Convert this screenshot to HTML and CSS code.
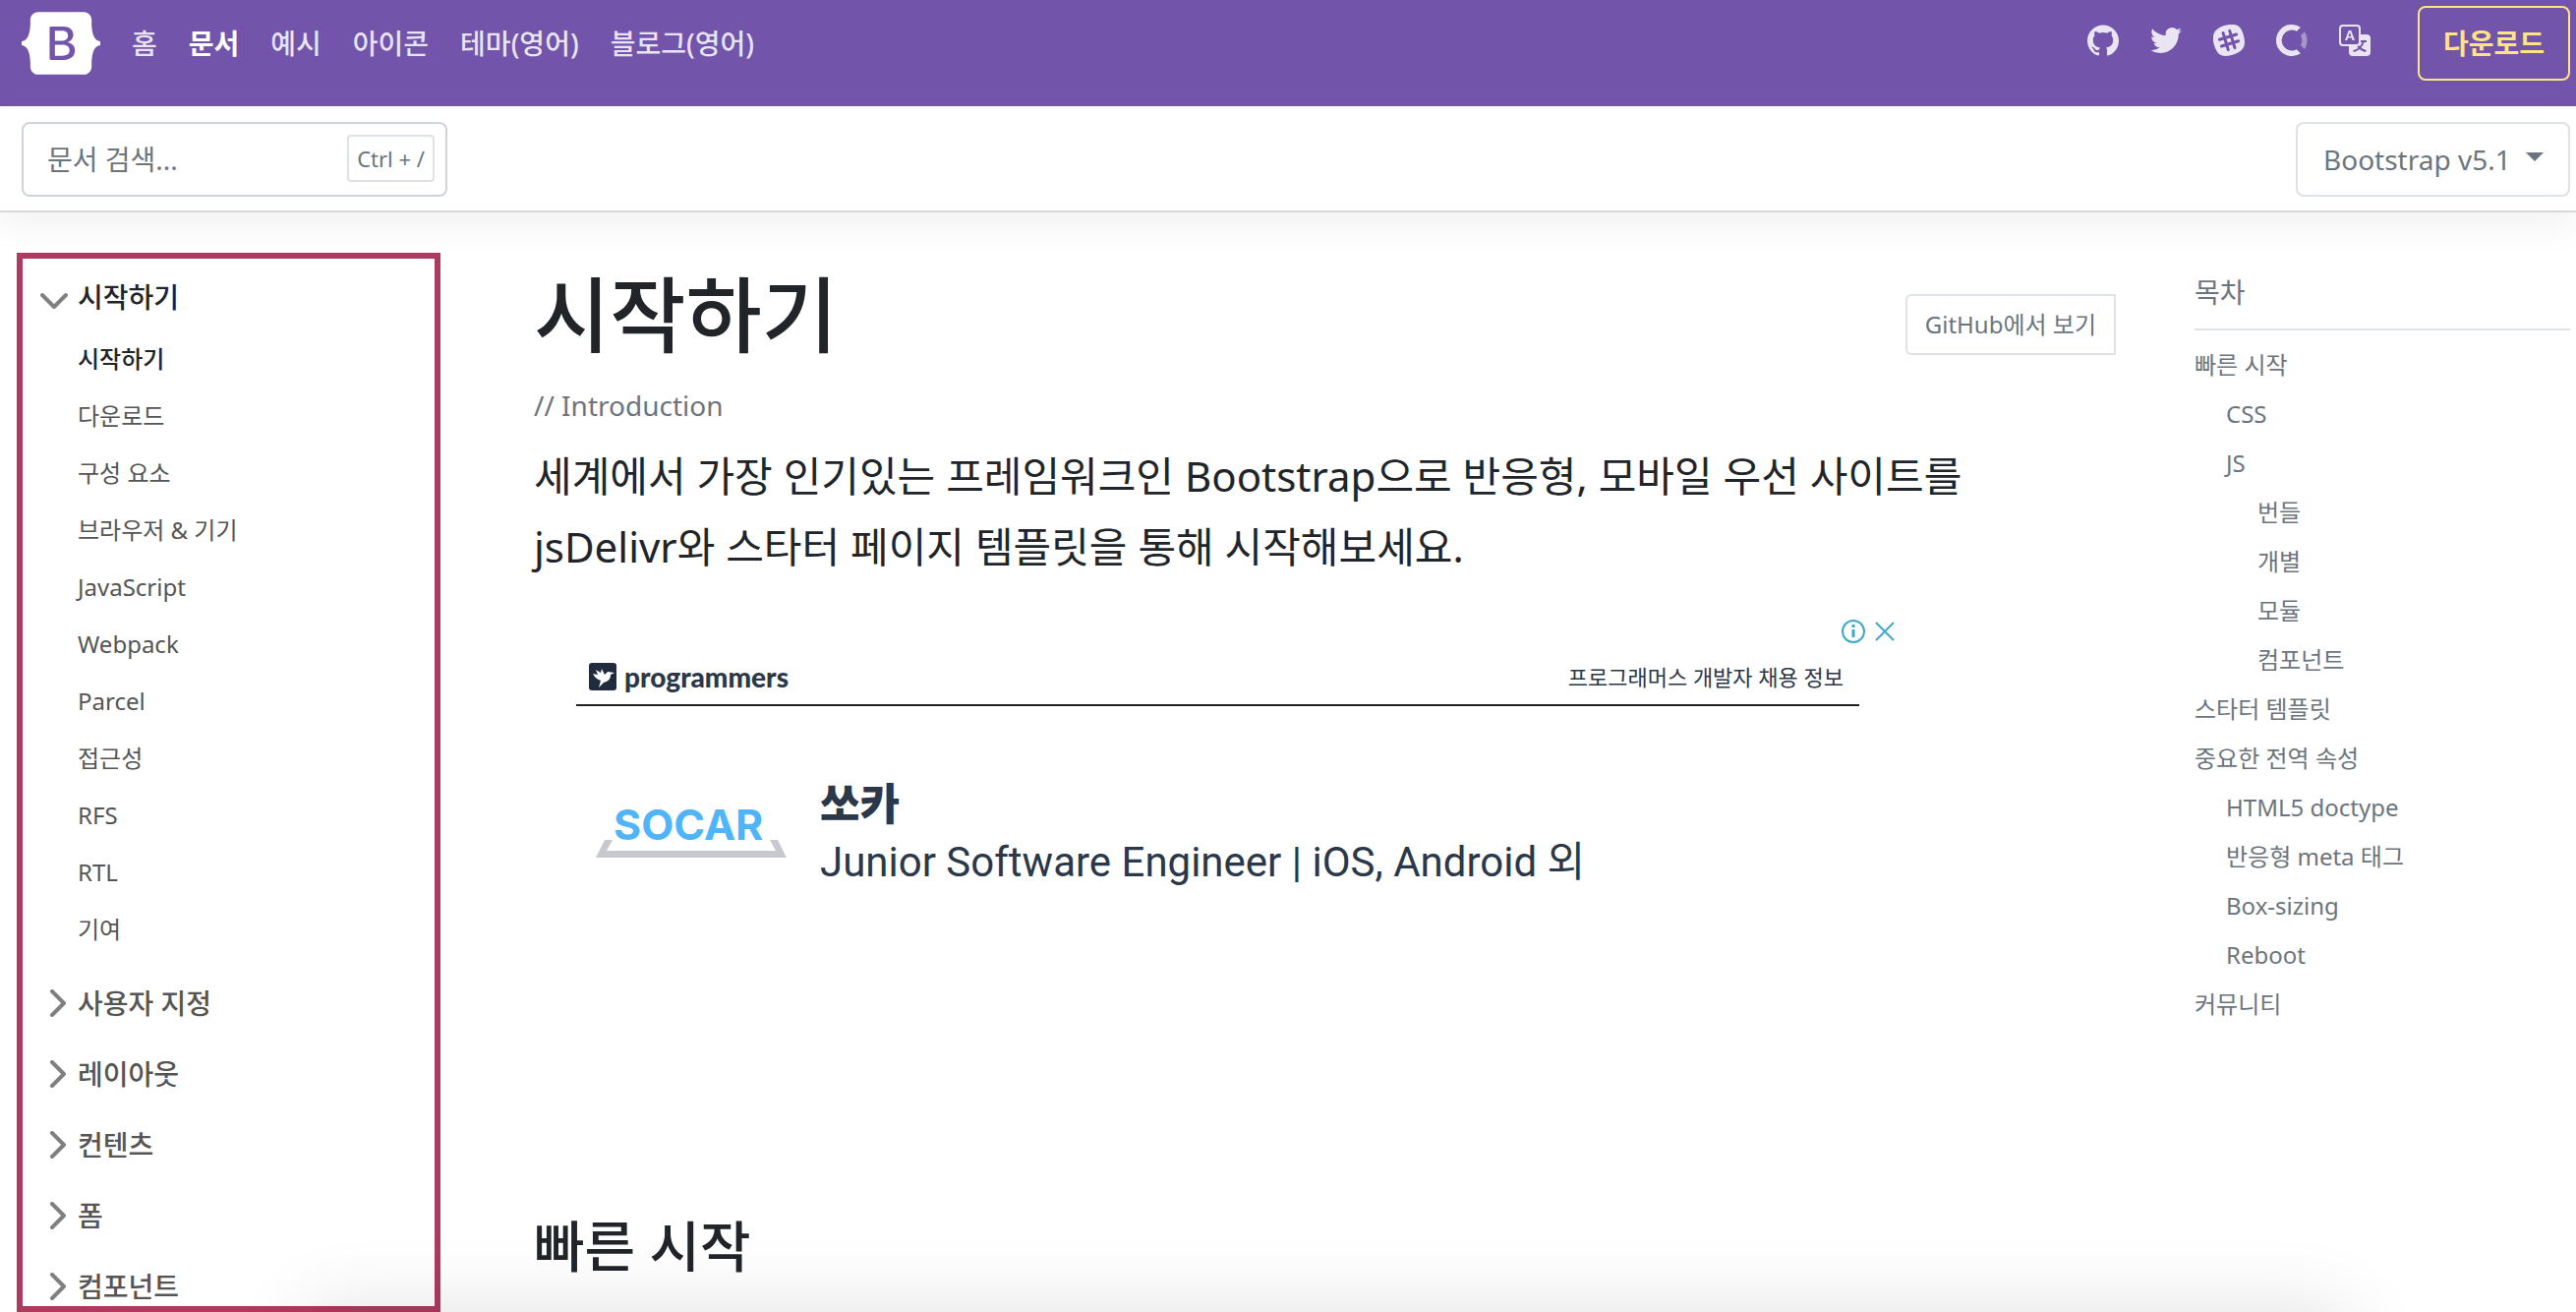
FILE: index.html
```html
<!DOCTYPE html>
<html lang="ko">
<head>
<meta charset="utf-8">
<meta name="viewport" content="width=device-width, initial-scale=1">
<title>시작하기 · Bootstrap v5.1</title>
<link rel="stylesheet" href="styles.css">
</head>
<body>
<header class="navbar">
  <a class="brand" href="#" aria-label="Bootstrap">
    <svg width="80" height="64" viewBox="0 0 118 94" fill="currentColor"><path fill-rule="evenodd" d="M24.509 0c-6.733 0-11.715 5.893-11.492 12.284.214 6.14-.064 14.092-2.066 20.577C8.943 39.365 5.547 43.485 0 44.014v5.972c5.547.529 8.943 4.649 10.951 11.153 2.002 6.485 2.28 14.437 2.066 20.577C12.794 88.106 17.776 94 24.51 94H93.5c6.733 0 11.714-5.893 11.491-12.284-.214-6.14.064-14.092 2.066-20.577 2.009-6.504 5.396-10.624 10.943-11.153v-5.972c-5.547-.529-8.934-4.649-10.943-11.153-2.002-6.484-2.28-14.437-2.066-20.577C105.214 5.894 100.233 0 93.5 0H24.508zM80 57.863C80 66.663 73.436 72 62.543 72H44a2 2 0 01-2-2V24a2 2 0 012-2h18.437c9.083 0 15.044 4.92 15.044 12.474 0 5.302-4.01 10.049-9.119 10.88v.277C75.317 46.394 80 51.21 80 57.863zM60.521 28.34H49.948v14.934h8.905c6.884 0 10.68-2.772 10.68-7.727 0-4.643-3.264-7.207-9.012-7.207zM49.948 49.2v16.458H60.91c7.167 0 10.964-2.876 10.964-8.281 0-5.406-3.903-8.178-11.425-8.178H49.948z"/></svg>
  </a>
  <nav class="main-nav">
    <a href="#">홈</a>
    <a href="#" class="active" aria-current="page">문서</a>
    <a href="#">예시</a>
    <a href="#">아이콘</a>
    <a href="#">테마(영어)</a>
    <a href="#">블로그(영어)</a>
  </nav>
  <nav class="social">
    <a href="#" aria-label="GitHub"><svg width="32" height="32" viewBox="0 0 512 499.36" fill="currentColor"><path fill-rule="evenodd" d="M256 0C114.64 0 0 114.61 0 256c0 113.09 73.34 209 175.08 242.9 12.8 2.35 17.47-5.56 17.47-12.34 0-6.08-.22-22.18-.35-43.54-71.2 15.49-86.2-34.34-86.2-34.34-11.64-29.57-28.42-37.45-28.42-37.45-23.27-15.84 1.73-15.55 1.73-15.55 25.69 1.81 39.21 26.38 39.21 26.38 22.84 39.12 59.92 27.82 74.5 21.27 2.33-16.54 8.94-27.82 16.25-34.22-56.84-6.43-116.6-28.43-116.6-126.49 0-27.95 10-50.8 26.35-68.69-2.63-6.48-11.42-32.5 2.51-67.75 0 0 21.49-6.88 70.4 26.24a242.65 242.65 0 0 1 128.18 0c48.87-33.13 70.33-26.24 70.33-26.24 14 35.25 5.18 61.27 2.55 67.75 16.41 17.9 26.31 40.75 26.31 68.69 0 98.35-59.85 120-116.88 126.32 9.19 7.9 17.38 23.53 17.38 47.41 0 34.22-.31 61.83-.31 70.23 0 6.85 4.61 14.81 17.6 12.31C438.72 464.97 512 369.08 512 256.02 512 114.62 397.37 0 256 0z"/></svg></a>
    <a href="#" aria-label="Twitter"><svg width="32" height="32" viewBox="0 0 512 416.32" fill="currentColor"><path d="M160.83 416.32c193.2 0 298.92-160.22 298.92-298.92 0-4.51 0-9-.2-13.52A214 214 0 0 0 512 49.38a212.93 212.93 0 0 1-60.44 16.6 105.7 105.7 0 0 0 46.3-58.19 209 209 0 0 1-66.79 25.37 105.09 105.09 0 0 0-181.73 71.91 116.12 116.12 0 0 0 2.66 24c-87.28-4.3-164.73-46.3-216.56-109.82A105.48 105.48 0 0 0 68 159.6a106.27 106.27 0 0 1-47.53-13.11v1.43a105.28 105.28 0 0 0 84.21 103.06 105.67 105.67 0 0 1-47.33 1.84 105.06 105.06 0 0 0 98.14 72.94A210.72 210.72 0 0 1 25 370.84a202.17 202.17 0 0 1-25-1.43 298.85 298.85 0 0 0 160.83 46.92"/></svg></a>
    <a href="#" aria-label="Slack"><svg width="32" height="32" viewBox="0 0 32 32"><path fill="currentColor" d="M12.4.8C23.600-1.800 28 .6 31 11.300c2.900 10.700-.5 16.200-11.300 19.400C8.900 33.700 4.200 31.300.9 20.700-2.200 9.700 1.300 4 12.400.8z"/><g class="slack-mark" transform="rotate(-17 16 16)"><path d="M12.500 7v18M19.500 7v18M7 12.500h18M7 19.500h18"/></g></svg></a>
    <a href="#" aria-label="Open Collective"><svg width="32" height="32" viewBox="0 0 32 32" fill="currentColor"><path d="M24.900 2.800A16 16 0 1 0 24.900 29.200L20.900 25.200A10.400 10.400 0 1 1 20.900 6.800z"/><path opacity=".45" d="M29 7.200L25 11.100a10.400 10.400 0 0 1 0 9.800l4 4a16 16 0 0 0 0-17.700z"/></svg></a>
    <a href="#" aria-label="언어"><svg width="32" height="32" viewBox="0 0 16 16" fill="currentColor"><path d="M4.545 6.714 4.110 8H3l1.862-5h1.284L8 8H6.833l-.435-1.286H4.545zm1.634-.736L5.500 3.956h-.049l-.679 2.022H6.180z"/><path d="M0 2a2 2 0 0 1 2-2h7a2 2 0 0 1 2 2v3h3a2 2 0 0 1 2 2v7a2 2 0 0 1-2 2H7a2 2 0 0 1-2-2v-3H2a2 2 0 0 1-2-2V2zm2-1a1 1 0 0 0-1 1v7a1 1 0 0 0 1 1h7a1 1 0 0 0 1-1V2a1 1 0 0 0-1-1H2zm7.138 9.995c.193.301.402.583.630.846-.748.575-1.673 1.001-2.768 1.292.178.217.451.635.555.867 1.125-.359 2.080-.844 2.886-1.494.777.665 1.739 1.165 2.930 1.472.133-.254.414-.673.629-.890-1.125-.253-2.057-.694-2.820-1.284.681-.747 1.222-1.651 1.621-2.757H14V8h-3v1.047h.765c-.318.844-.740 1.546-1.272 2.130a6.066 6.066 0 0 1-.415-.492 1.988 1.988 0 0 1-.940.310z"/></svg></a>
  </nav>
  <a class="download" href="#">다운로드</a>
</header>

<div class="subnav">
  <form class="search">
    <input type="search" placeholder="문서 검색..." aria-label="문서 검색">
    <kbd>Ctrl + /</kbd>
  </form>
  <div class="version">
    <select aria-label="버전"><option>Bootstrap v5.1</option></select>
    <svg width="18" height="9" viewBox="0 0 18 9" fill="currentColor"><path d="M0 0h18L9 9z"/></svg>
  </div>
</div>

<div class="layout">
  <aside class="sidebar">
    <button class="group open" type="button" aria-expanded="true"><svg width="28" height="28" viewBox="0 0 28 28"><path d="M2 12l12 12L26 12"/></svg>시작하기</button>
    <ul class="links">
      <li><a href="#" class="active" aria-current="page">시작하기</a></li>
      <li><a href="#">다운로드</a></li>
      <li><a href="#">구성 요소</a></li>
      <li><a href="#">브라우저 &amp; 기기</a></li>
      <li><a href="#">JavaScript</a></li>
      <li><a href="#">Webpack</a></li>
      <li><a href="#">Parcel</a></li>
      <li><a href="#">접근성</a></li>
      <li><a href="#">RFS</a></li>
      <li><a href="#">RTL</a></li>
      <li><a href="#">기여</a></li>
    </ul>
    <button class="group" type="button"><svg width="28" height="28" viewBox="0 0 28 28"><path d="M12 2l12 12-12 12"/></svg>사용자 지정</button>
    <button class="group" type="button"><svg width="28" height="28" viewBox="0 0 28 28"><path d="M12 2l12 12-12 12"/></svg>레이아웃</button>
    <button class="group" type="button"><svg width="28" height="28" viewBox="0 0 28 28"><path d="M12 2l12 12-12 12"/></svg>컨텐츠</button>
    <button class="group" type="button"><svg width="28" height="28" viewBox="0 0 28 28"><path d="M12 2l12 12-12 12"/></svg>폼</button>
    <button class="group" type="button"><svg width="28" height="28" viewBox="0 0 28 28"><path d="M12 2l12 12-12 12"/></svg>컴포넌트</button>
  </aside>

  <main class="content">
    <div class="title-row">
      <h1>시작하기</h1>
      <a class="view-source" href="#">GitHub에서 보기</a>
    </div>
    <p class="section-name">// Introduction</p>
    <p class="lead">세계에서 가장 인기있는 프레임워크인 Bootstrap으로 반응형, 모바일 우선 사이트를 jsDelivr와 스타터 페이지 템플릿을 통해 시작해보세요.</p>

    <section class="ad" aria-label="광고">
      <div class="ad-controls">
        <button type="button" aria-label="광고 정보"><svg width="24" height="24" viewBox="0 0 24 24"><circle cx="12" cy="12" r="11"/><path class="thick" d="M12 10v8M12 5v3"/></svg></button>
        <button type="button" aria-label="광고 닫기"><svg width="20" height="20" viewBox="0 0 20 20"><path d="M1 1l18 18M19 1L1 19"/></svg></button>
      </div>
      <div class="ad-head">
        <svg width="28" height="28" viewBox="0 0 28 28"><rect width="28" height="28" rx="3" fill="#202b3d"/><path fill="#fff" d="M4 11l5 1-2-5 5 3 1-4 3 6 3-3 7 1-4 2c0 5-3 7-7 8l-5 5 2-7c-3-1-6-3-8-7z"/></svg>
        <strong>programmers</strong>
        <span>프로그래머스 개발자 채용 정보</span>
      </div>
      <a class="ad-body" href="#">
        <svg class="socar" width="194" height="76" viewBox="0 0 194 76"><path fill="#c8c8cf" d="M9 46H17L11 57H183L177 46H185L194 64H0z"/><text x="18" y="46">SOCAR</text></svg>
        <span class="ad-text"><strong>쏘카</strong><span>Junior Software Engineer | iOS, Android 외</span></span>
      </a>
    </section>

    <h2>빠른 시작</h2>
  </main>

  <nav class="toc" aria-labelledby="toc-title">
    <p id="toc-title" class="toc-title">목차</p>
    <ul>
      <li><a href="#">빠른 시작</a>
        <ul>
          <li><a href="#">CSS</a></li>
          <li><a href="#">JS</a>
            <ul>
              <li><a href="#">번들</a></li>
              <li><a href="#">개별</a></li>
              <li><a href="#">모듈</a></li>
              <li><a href="#">컴포넌트</a></li>
            </ul>
          </li>
        </ul>
      </li>
      <li><a href="#">스타터 템플릿</a></li>
      <li><a href="#">중요한 전역 속성</a>
        <ul>
          <li><a href="#">HTML5 doctype</a></li>
          <li><a href="#">반응형 meta 태그</a></li>
          <li><a href="#">Box-sizing</a></li>
          <li><a href="#">Reboot</a></li>
        </ul>
      </li>
      <li><a href="#">커뮤니티</a></li>
    </ul>
  </nav>
</div>
</body>
</html>
```
FILE: styles.css
```css
* {
  box-sizing: border-box;
}

body {
  display: flex;
  flex-direction: column;
  height: 100vh;
  margin: 0;
  overflow: hidden;
  background: #fff;
  color: #212529;
  font-family: "Noto Sans", "Noto Sans CJK KR", sans-serif;
  font-size: 28px;
  line-height: 40px;
}

/* soft shade along the bottom edge of the window */
body::after {
  content: "";
  position: fixed;
  top: 100%;
  right: 9%;
  left: 12%;
  height: 80px;
  box-shadow: 0 0 80px rgba(0, 0, 0, 0.13);
  pointer-events: none;
}

a {
  color: inherit;
  text-decoration: none;
}

button,
input,
select {
  font: inherit;
}

button {
  padding: 0;
  border: 0;
  background: none;
  cursor: pointer;
}

svg {
  display: block;
  flex: none;
}

ul {
  margin: 0;
  padding: 0;
  list-style: none;
}

/* top bar */
.navbar {
  display: flex;
  flex: none;
  align-items: center;
  padding: 6px 6px 26px 22px;
  background: #7354ab;
  color: #fff;
}

.main-nav {
  display: flex;
  gap: 32px;
  margin-left: 32px;
  color: rgba(255, 255, 255, 0.85);
  font-weight: 500;
}

.main-nav .active {
  color: #fff;
  font-weight: 700;
}

.social {
  display: flex;
  gap: 32px;
  margin-left: auto;
  padding-bottom: 6px;
  color: rgba(255, 255, 255, 0.85);
}

.slack-mark {
  fill: none;
  stroke: #7354ab;
  stroke-linecap: round;
  stroke-width: 3;
}

.download {
  margin-left: 48px;
  padding: 16px 24px;
  border: 2px solid #ffe484;
  border-radius: 8px;
  color: #ffe484;
  font-weight: 700;
}

/* search and version bar */
.subnav {
  position: relative;
  display: flex;
  flex: none;
  justify-content: space-between;
  padding: 16px 6px 16px 22px;
  box-shadow: 0 16px 32px rgba(0, 0, 0, 0.05), inset 0 -2px 0 rgba(0, 0, 0, 0.15);
}

.search,
.version {
  position: relative;
}

.search input {
  width: 433px;
  height: 76px;
  padding: 0 24px;
  border: 2px solid #ced4da;
  border-radius: 8px;
  background: #fff;
}

.search input::placeholder {
  color: #6c757d;
  opacity: 1;
}

.search kbd {
  position: absolute;
  top: 13px;
  right: 13px;
  padding: 2px 8px;
  border: 2px solid #dee2e6;
  border-radius: 4px;
  color: #6c757d;
  font-family: inherit;
  font-size: 22px;
}

.version {
  color: #6c757d;
}

.version select {
  height: 76px;
  padding: 0 58px 0 26px;
  appearance: none;
  border: 2px solid #dee2e6;
  border-radius: 8px;
  background: #fff;
  color: inherit;
}

.version svg {
  position: absolute;
  top: 31px;
  right: 27px;
  pointer-events: none;
}

/* three columns */
.layout {
  display: grid;
  flex: 1;
  grid-template-columns: 431px minmax(0, 1fr) 382px;
  min-height: 0;
  padding: 41px 6px 0 17px;
}

.sidebar {
  min-height: 0;
  padding: 7px 0 0 18px;
  overflow: hidden;
  border: 6px solid #ad3a5f;
}

.group {
  display: flex;
  gap: 10px;
  align-items: center;
  height: 64px;
  margin-bottom: 8px;
  color: #555;
  font-weight: 500;
}

.group svg {
  fill: none;
  stroke: #808080;
  stroke-linecap: round;
  stroke-linejoin: round;
  stroke-width: 4;
}

.group.open {
  margin-bottom: 2px;
  color: #212529;
}

.links {
  margin-bottom: 14px;
  padding-left: 38px;
  color: #555;
  font-size: 24px;
  line-height: 58px;
}

.links .active {
  color: #212529;
  font-weight: 500;
}

.content {
  padding: 11px 80px 0 95px;
}

.title-row {
  display: flex;
  align-items: center;
  justify-content: space-between;
}

h1,
h2,
p {
  margin: 0;
}

h1 {
  font-size: 84px;
  font-weight: 500;
  line-height: 104px;
}

.view-source {
  margin-top: 20px;
  padding: 9px 18px;
  border: 2px solid #dee2e6;
  border-radius: 6px 0 0 6px;
  color: #6c757d;
  font-size: 24px;
}

.section-name {
  margin-top: 20px;
  color: #6c757d;
}

.lead {
  max-width: 1500px;
  margin-top: 16px;
  font-size: 42px;
  line-height: 72px;
}

/* sponsored block */
.ad {
  width: 1386px;
  max-width: 100%;
  margin-top: 38px;
  color: #2b3849;
}

.ad-controls {
  display: flex;
  gap: 10px;
  align-items: center;
  justify-content: flex-end;
  padding-right: 2px;
}

.ad-controls svg {
  fill: none;
  stroke: #3fa9c9;
  stroke-width: 2;
}

.ad-controls .thick {
  stroke-width: 3;
}

.ad-head {
  display: flex;
  gap: 8px;
  align-items: center;
  margin: 14px 38px 0 43px;
  padding: 0 16px 8px 13px;
  border-bottom: 2px solid #222;
}

.ad-head strong {
  font-family: Lato, sans-serif;
  font-weight: 900;
}

.ad-head span {
  margin-left: auto;
  font-size: 22px;
}

.ad-body {
  display: flex;
  gap: 34px;
  align-items: center;
  margin: 66px 0 0 63px;
}

.socar text {
  fill: #4fb5f8;
  font-family: Inter, sans-serif;
  font-size: 43px;
  font-weight: 700;
}

.ad-text {
  display: flex;
  flex-direction: column;
  font-family: Roboto, "Noto Sans CJK KR", sans-serif;
  font-size: 42px;
  line-height: 62px;
}

.ad-text strong {
  font-family: "Noto Sans CJK KR", sans-serif;
  font-size: 44px;
  font-weight: 900;
}

h2 {
  margin-top: 322px;
  font-size: 56px;
  font-weight: 500;
  line-height: 72px;
}

/* table of contents */
.toc {
  padding-top: 20px;
  color: #6c757d;
  font-size: 24px;
  line-height: 50px;
}

.toc-title {
  margin-bottom: 10px;
  padding-bottom: 17px;
  border-bottom: 2px solid #dee2e6;
  font-size: 28px;
  line-height: 40px;
}

.toc ul ul {
  padding-left: 32px;
}
```
